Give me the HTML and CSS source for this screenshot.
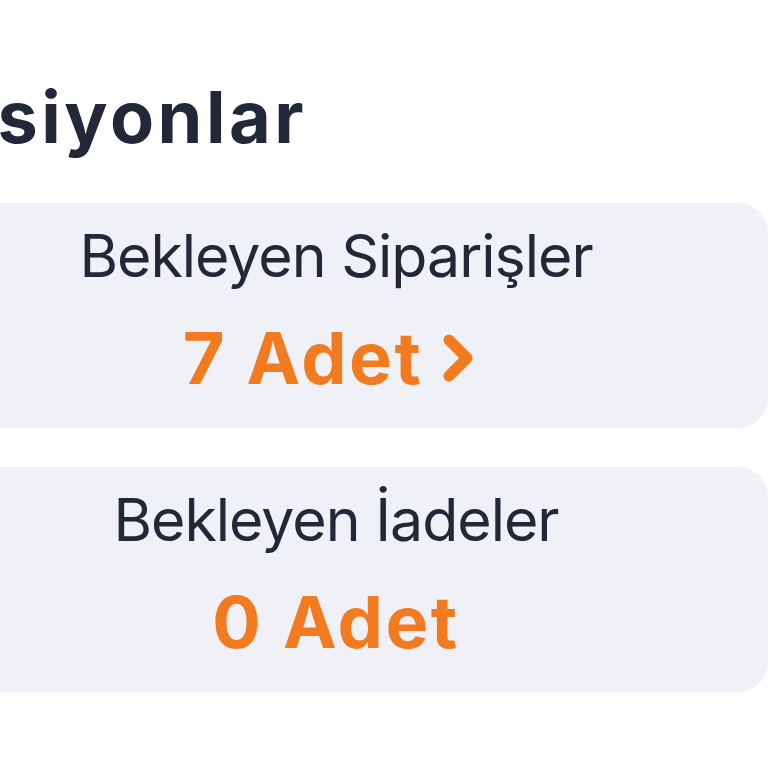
FILE: index.html
```html
<!DOCTYPE html>
<html lang="tr">
<head>
<meta charset="utf-8" />
<meta name="viewport" content="width=device-width" />
<title>Aksiyonlar</title>
<link rel="stylesheet" href="styles.css">
</head>
<body>
<div id="actions">
	<h1 class="sectionTitle">Aksiyonlar</h1>
	<div class="actionCard">
		<div class="cardLabel">Bekleyen Siparişler</div>
		<div class="cardValue">7 Adet<svg class="chevron" viewBox="0 0 30 48" width="30" height="48"><path d="M6 6 L24 24 L6 42" /></svg></div>
	</div>
	<div class="actionCard">
		<div class="cardLabel">Bekleyen İadeler</div>
		<div class="cardValue">0 Adet</div>
	</div>
</div>
</body>
</html>
```

FILE: styles.css
```css
html, body {
	margin: 0;
	padding: 0;
	background: #fff;
}
body {
	font-family: Inter, "Noto Sans", sans-serif;
	color: #222838;
	overflow: hidden;
}
div#actions {
	width: 864px;
	margin-left: -96px;
	padding-top: 74px;
	display: flex;
	flex-direction: column;
}
h1.sectionTitle {
	margin: 0 0 43px -9px;
	font-size: 72px;
	line-height: 86px;
	font-weight: 700;
	letter-spacing: 3.5px;
}
div.actionCard {
	height: 225px;
	box-sizing: border-box;
	padding: 18px 0 0 0;
	background-color: #eff1f6;
	border-radius: 30px;
	display: flex;
	flex-direction: column;
	align-items: center;
	gap: 25px;
}
div.actionCard + div.actionCard {
	margin-top: 39px;
}
div.cardLabel {
	font-size: 59px;
	line-height: 70px;
	font-weight: 400;
	letter-spacing: -1px;
}
div.cardValue {
	font-size: 72px;
	line-height: 84px;
	font-weight: 700;
	letter-spacing: 2.5px;
	color: #f27b1f;
	display: flex;
	align-items: center;
}
svg.chevron {
	margin-left: 20px;
	margin-right: 16px;
	fill: none;
	stroke: #f27b1f;
	stroke-width: 11;
	stroke-linecap: round;
	stroke-linejoin: round;
}
```
